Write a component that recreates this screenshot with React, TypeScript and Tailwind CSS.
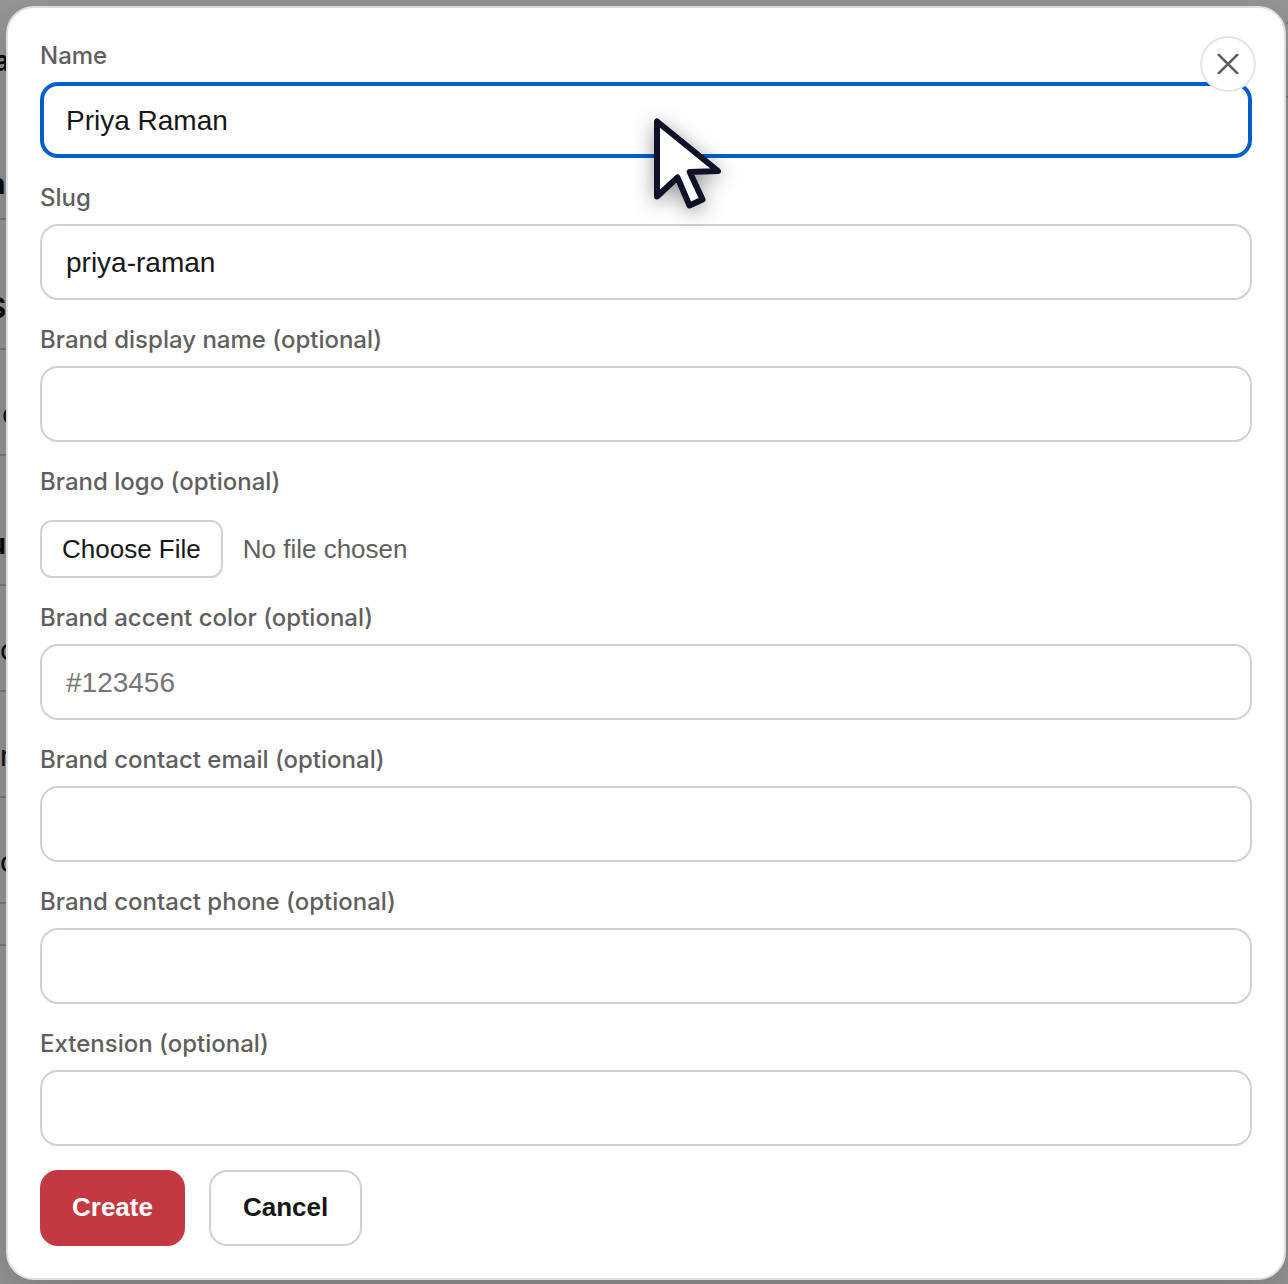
import { useState } from "react";

const labelClass = "block font-[Inter,sans-serif] text-[24px] font-medium leading-8 text-[#5f5f5f]";
const inputClass =
  "block h-[76px] w-full rounded-[18px] border-2 border-[#d1d1d1] bg-white px-6 pt-0.5 text-[28px] text-[#171717] outline-none placeholder:text-[#757575] focus:border-4 focus:border-[#005fcc] focus:px-[22px]";

type FieldProps = { id: string; label: string; type?: string; value?: string; placeholder?: string; active?: boolean };

function Field({ id, label, type = "text", value = "", placeholder, active }: FieldProps) {
  const [text, setText] = useState(value);
  return (
    <div className="flex flex-col gap-2.5">
      <label htmlFor={id} className={labelClass}>{label}</label>
      <input
        id={id}
        type={type}
        value={text}
        placeholder={placeholder}
        onChange={(e) => setText(e.target.value)}
        className={
          active
            ? "block h-[76px] w-full rounded-[18px] border-4 border-[#005fcc] bg-white px-[22px] pt-0.5 text-[28px] text-[#171717] outline-none"
            : inputClass
        }
      />
    </div>
  );
}

function PageBehind() {
  const row = "flex shrink-0 items-center border-b-2 border-[#787878]";
  return (
    <div aria-hidden="true" className="absolute inset-0 flex justify-between overflow-hidden bg-[#969696] font-[Inter,sans-serif] text-[28px] text-[#0c0c0c]">
      <div className="flex w-1.5 flex-col overflow-hidden">
        <div className="flex h-[122px] shrink-0 items-center justify-end font-bold"><span className="-mr-1">a</span></div>
        <div className={`${row} h-[98px] justify-end pt-7 font-bold`}><span className="-mr-4">ne</span></div>
        <div className={`${row} h-[130px] justify-end pt-12 font-bold`}>S</div>
        <div className={`${row} h-[106px] pt-6 pl-0.5`}>c</div>
        <div className={`${row} h-[130px] justify-end pt-12 font-bold`}>u</div>
        <div className={`${row} h-[106px] pt-6`}>c</div>
        <div className={`${row} h-[106px] pt-6`}>r</div>
        <div className={`${row} h-[106px] pt-6`}>c</div>
        <div className={`${row} h-[42px]`} />
      </div>
      <div className="flex w-0.5 flex-col">
        <div className={`${row} h-6`} />
        <div className={`${row} h-[74px]`} />
      </div>
    </div>
  );
}

function Pointer() {
  return (
    <svg aria-hidden="true" width="80" height="100" viewBox="0 0 80 100" className="pointer-events-none absolute top-[110px] left-1/2 overflow-visible drop-shadow-[0_4px_10px_rgba(0,0,0,0.4)]">
      <path d="M13 11.5V86.5L33.5 67.5L45.5 95.5L58.5 89.5L45.7 62L74 61Z" fill="#fff" stroke="#0f1226" strokeWidth="6" strokeLinejoin="round" />
    </svg>
  );
}

export default function App() {
  return (
    <div className="relative min-h-screen overflow-hidden pt-1.5 pr-0.5 pb-1 pl-1.5 font-['Liberation_Sans',Arial,sans-serif]">
      <PageBehind />
      <div role="dialog" aria-modal="true" aria-label="Create brand" className="relative rounded-[28px] border-2 border-[#dedede] bg-white p-8 shadow-[0_20px_60px_rgba(0,0,0,0.2)]">
        <form className="flex flex-col gap-6" onSubmit={(e) => e.preventDefault()}>
          <Field id="name" label="Name" value="Priya Raman" active />
          <Field id="slug" label="Slug" value="priya-raman" />
          <Field id="display-name" label="Brand display name (optional)" />
          <div className="flex flex-col gap-[22px]">
            <label htmlFor="logo" className={labelClass}>Brand logo (optional)</label>
            <input
              id="logo"
              type="file"
              className="block h-[58px] w-full text-[26px] leading-[30px] text-[#5f5f5f] file:mr-5 file:h-[58px] file:rounded-xl file:border-2 file:border-solid file:border-[#d1d1d1] file:bg-white file:px-5 file:text-[26px] file:text-[#171717]"
            />
          </div>
          <Field id="accent" label="Brand accent color (optional)" placeholder="#123456" />
          <Field id="email" label="Brand contact email (optional)" type="email" />
          <Field id="phone" label="Brand contact phone (optional)" type="tel" />
          <Field id="extension" label="Extension (optional)" />
          <div className="flex gap-6 text-[26px] font-bold">
            <button type="submit" className="h-[76px] rounded-[18px] bg-[#c43842] px-8 pb-0.5 text-white">Create</button>
            <button type="button" className="h-[76px] rounded-[18px] border-2 border-[#d1d1d1] bg-white px-8 pb-0.5 text-[#171717]">Cancel</button>
          </div>
        </form>
        <button type="button" aria-label="Close" className="absolute top-7 right-7 flex size-14 items-center justify-center rounded-full border-2 border-[#e5e5e5] bg-white text-[#5c5c5c]">
          <svg width="22" height="22" viewBox="0 0 22 22" fill="none" stroke="currentColor" strokeWidth="2.6" strokeLinecap="round">
            <path d="M1.8 1.8L20.2 20.2M20.2 1.8L1.8 20.2" />
          </svg>
        </button>
      </div>
      <Pointer />
    </div>
  );
}
